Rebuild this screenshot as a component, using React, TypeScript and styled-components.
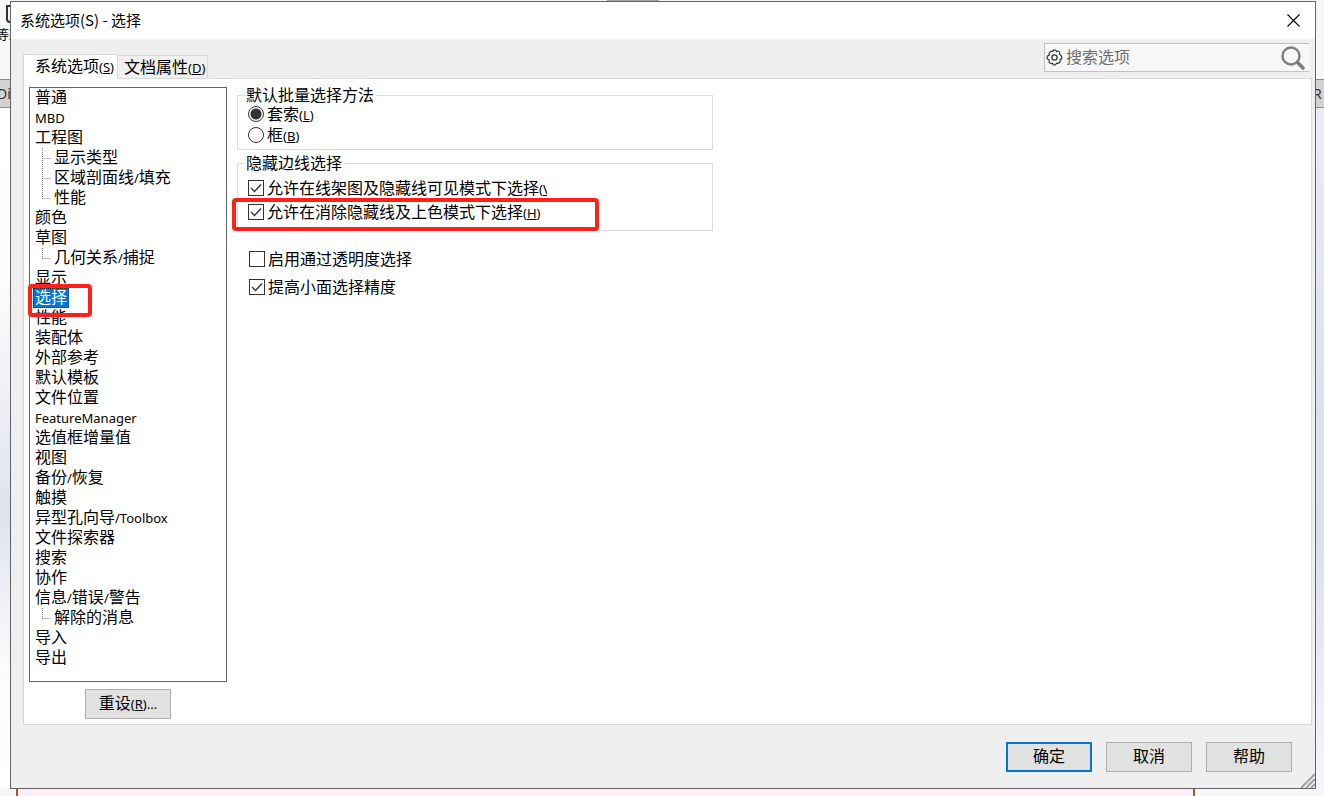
import React from "react";
import styled, { createGlobalStyle, css } from "styled-components";

const cjk = '"Noto Sans CJK SC", sans-serif';

const GlobalStyle = createGlobalStyle`
  * { box-sizing: border-box; }
  body { margin: 0; background: #f7f7f7; color: #000; font: 16px/20px ${cjk}; }
  button, input { font: inherit; color: inherit; }
`;

const Desktop = styled.div`
  display: grid;
  grid-template-columns: 10px minmax(0, 1fr) 8px;
  grid-template-rows: 1px 1fr 7px;
  min-height: 100vh;
`;

const TopStrip = styled.div`
  grid-column: 1 / -1;
  background: #f7f7f7;
  padding-left: 607px;
`;

const TopTab = styled.div`
  width: 52px;
  height: 1px;
  background: #a5a5a5;
`;

const Gutter = styled.div<{ $side: "left" | "right" }>`
  display: flex;
  flex-direction: column;
  overflow: hidden;
  background: ${(p) =>
    p.$side === "left"
      ? "linear-gradient(#f7f7f7 107px, #fff 107px, #fdfdfe 35%, #dfe3ec 65%, #fbfbfd 85%, #fff)"
      : "linear-gradient(#f7f7f7 107px, #eaecf4 107px, #dbe0ec 55%, #dde1ed 70%, #f5f6fa)"};
`;

const Ribbon = styled.div`
  display: flex;
  flex-direction: column;
  align-items: flex-end;
  height: 78px;
  padding-top: 4px;
  svg { display: block; }
`;

const RibbonLabel = styled.span`
  align-self: flex-start;
  margin-left: -4px;
  font-size: 13px;
  white-space: nowrap;
`;

const PanelCaption = styled.div`
  height: 29px;
  border: 1px solid #8c8c8c;
  border-width: 1px 0;
  background: #d2d2d2;
  color: #333;
  font: 14px/27px "Noto Sans", sans-serif;
  text-indent: -3px;
`;

const BottomStrip = styled.div`
  grid-column: 1 / -1;
  display: grid;
  grid-template-columns: 16px minmax(0, 1179fr) minmax(0, 129fr);
  background: #f7f7fb;
`;

const Sheet = styled.div`
  border: 2px solid #a8581c;
  border-width: 0 2px;
  background: #ffeef8;
`;

const Dialog = styled.main`
  display: flex;
  flex-direction: column;
  min-width: 0;
  border: 1px solid #646464;
  background: #efefef;
`;

const TitleBar = styled.header`
  display: flex;
  align-items: center;
  justify-content: space-between;
  height: 37px;
  padding: 0 15px 0 9px;
  background: #fff;
`;

const Title = styled.h1`
  margin: 0;
  padding-bottom: 2px;
  font: 15px/20px ${cjk};
`;

const CloseButton = styled.button`
  display: flex;
  padding: 0;
  border: 0;
  background: none;
`;

const TabBar = styled.div`
  display: flex;
  align-items: flex-end;
  height: 39px;
  padding: 0 6px 0 12px;
`;

const TabList = styled.div`
  display: flex;
  align-items: flex-end;
  flex: 1;
`;

const Tab = styled.button<{ $active?: boolean }>`
  display: flex;
  align-items: baseline;
  justify-content: center;
  height: 23px;
  padding: 0 2px 0 6px;
  border: 1px solid #d9d9d9;
  border-width: 1px 1px 0 0;
  background: #f0f0f0;
  line-height: 20px;
  ${(p) =>
    p.$active &&
    css`
      height: 25px;
      padding: 0 3px 4px 11px;
      border-left-width: 1px;
      margin-bottom: -1px;
      background: #fff;
      z-index: 1;
    `}
`;

const Search = styled.label`
  display: flex;
  align-items: center;
  align-self: flex-start;
  gap: 3px;
  width: 265px;
  height: 29px;
  margin-top: 4px;
  padding: 0 4px 0 1px;
  border: 1px solid #c3c3c3;
  border-right: 0;
  background: #f7f7f7;
`;

const SearchInput = styled.input`
  flex: 1;
  min-width: 0;
  padding: 0 0 4px;
  border: 0;
  outline: 0;
  background: none;
  &::placeholder { color: #6d6d6d; opacity: 1; }
`;

const Page = styled.section`
  display: flex;
  flex: 1;
  gap: 10px;
  margin: 0 3px 0 12px;
  padding: 8px 5px 5px;
  border: 1px solid #d9d9d9;
  background: #fff;
`;

const Sidebar = styled.nav`
  display: flex;
  flex-direction: column;
  align-items: center;
  gap: 7px;
  width: 198px;
`;

const Tree = styled.ul`
  flex: 1;
  align-self: stretch;
  margin: 0;
  padding: 0 0 0 3px;
  border: 1px solid #646464;
  list-style: none;
`;

const TreeRow = styled.li`
  display: flex;
  align-items: center;
  height: 20px;
  position: relative;
`;

const TreeItem = styled.button<{ $selected?: boolean }>`
  height: 20px;
  padding: 0 2px 4px;
  border: 0;
  background: none;
  line-height: 16px;
  white-space: nowrap;
  ${(p) =>
    p.$selected &&
    css`
      background: #0078d7;
      color: #fff;
      outline: 1px dotted #222;
      outline-offset: -1px;
    `}
`;

const Latin = styled.span`
  font: 13px/14px "Noto Sans", sans-serif;
`;

const Branch = styled.svg`
  display: block;
  flex: none;
`;

const Marker = styled.span<{ $x: number; $y: number; $width: number; $height: number }>`
  position: absolute;
  left: ${(p) => p.$x}px;
  top: ${(p) => p.$y}px;
  width: ${(p) => p.$width}px;
  height: ${(p) => p.$height}px;
  border: 4px solid #ff2116;
  border-radius: 4px;
  pointer-events: none;
  z-index: 2;
`;

const PushButton = styled.button<{ $primary?: boolean }>`
  width: 86px;
  height: 30px;
  padding: 0 0 4px;
  border: ${(p) => (p.$primary ? "2px solid #0078d7" : "1px solid #adadad")};
  background: #e1e1e1;
`;

const Options = styled.div`
  display: flex;
  flex-direction: column;
  gap: 5px;
  width: 476px;
  min-width: 0;
`;

const Group = styled.fieldset<{ $height: number; $top: number; $gap: number }>`
  position: relative;
  display: flex;
  flex-direction: column;
  gap: ${(p) => p.$gap}px;
  height: ${(p) => p.$height}px;
  margin: 0;
  padding: ${(p) => p.$top}px 0 0 10px;
  border: 1px solid #dcdcdc;
`;

const Legend = styled.legend`
  margin-left: -4px;
  padding: 0 2px;
  height: 16px;
  line-height: 14px;
`;

const Option = styled.label`
  display: flex;
  align-items: center;
  gap: 3px;
  height: 20px;
  white-space: nowrap;
`;

const OptionText = styled.span<{ $width?: number }>`
  padding-bottom: 2px;
  ${(p) =>
    p.$width &&
    css`
      width: ${p.$width}px;
      overflow: hidden;
    `}
`;

const Toggle = styled.input`
  appearance: none;
  flex: none;
  width: 16px;
  height: 16px;
  margin: 0;
  border: 1px solid #333;
  background: #fff center / 14px 14px no-repeat;
  &[type="radio"] { border-radius: 50%; }
  &[type="radio"]:checked { background-image: radial-gradient(circle, #333 5px, transparent 6px); }
`;

const CheckBox = styled.span`
  display: grid;
  > * { grid-area: 1 / 1; }
  svg { pointer-events: none; z-index: 1; visibility: hidden; }
  input:checked + svg { visibility: visible; }
`;

const LooseOptions = styled.div`
  display: flex;
  flex-direction: column;
  gap: 8px;
  padding: 13px 0 0 12px;
`;

const Footer = styled.footer`
  display: flex;
  justify-content: flex-end;
  gap: 14px;
  height: 63px;
  padding: 17px 23px 0 0;
  position: relative;
`;

const Grip = styled.svg`
  position: absolute;
  right: 0;
  bottom: 0;
`;

function Key({ k, tail = "" }: { k: string; tail?: string }) {
  return (
    <Latin>
      (<u>{k}</u>){tail}
    </Latin>
  );
}

function Check({ checked }: { checked?: boolean }) {
  return (
    <CheckBox>
      <Toggle type="checkbox" defaultChecked={checked} />
      <svg width="16" height="16" viewBox="0 0 16 16" fill="none" stroke="#333" strokeWidth="1.4">
        <path d="M3 8l3.5 3.5L13 4.5" />
      </svg>
    </CheckBox>
  );
}

type Item = { text: string; latin?: string; after?: string; child?: "mid" | "last"; selected?: boolean };

const items: Item[] = [
  { text: "普通" },
  { text: "", latin: "MBD" },
  { text: "工程图" },
  { text: "显示类型", child: "mid" },
  { text: "区域剖面线", latin: "/", after: "填充", child: "mid" },
  { text: "性能", child: "last" },
  { text: "颜色" },
  { text: "草图" },
  { text: "几何关系", latin: "/", after: "捕捉", child: "last" },
  { text: "显示" },
  { text: "选择", selected: true },
  { text: "性能" },
  { text: "装配体" },
  { text: "外部参考" },
  { text: "默认模板" },
  { text: "文件位置" },
  { text: "", latin: "FeatureManager" },
  { text: "选值框增量值" },
  { text: "视图" },
  { text: "备份", latin: "/", after: "恢复" },
  { text: "触摸" },
  { text: "异型孔向导", latin: "/Toolbox" },
  { text: "文件探索器" },
  { text: "搜索" },
  { text: "协作" },
  { text: "信息", latin: "/", after: "错误/警告" },
  { text: "解除的消息", child: "last" },
  { text: "导入" },
  { text: "导出" },
];

function Slashed({ text }: { text: string }) {
  return (
    <>
      {text.split("/").map((part, i) => (
        <React.Fragment key={i}>
          {i > 0 && <Latin>/</Latin>}
          {part}
        </React.Fragment>
      ))}
    </>
  );
}

export default function App() {
  return (
    <>
      <GlobalStyle />
      <Desktop>
        <TopStrip>
          <TopTab />
        </TopStrip>
        <Gutter $side="left">
          <Ribbon>
            <svg width="4" height="19" viewBox="0 0 4 19" fill="none" stroke="#333" strokeWidth="2">
              <path d="M4 1H1v13q0 3 3 3" />
            </svg>
            <RibbonLabel>等距</RibbonLabel>
          </Ribbon>
          <PanelCaption>Dim</PanelCaption>
        </Gutter>
        <Dialog>
          <TitleBar>
            <Title>系统选项(S) - 选择</Title>
            <CloseButton aria-label="关闭">
              <svg width="13" height="13" viewBox="0 0 13 13" stroke="#000" strokeWidth="1.1">
                <path d="M.5.5l12 12M12.5.5l-12 12" />
              </svg>
            </CloseButton>
          </TitleBar>
          <TabBar>
            <TabList role="tablist">
              <Tab role="tab" aria-selected $active>
                系统选项
                <Key k="S" />
              </Tab>
              <Tab role="tab">
                文档属性
                <Key k="D" />
              </Tab>
            </TabList>
            <Search>
              <svg width="17" height="17" viewBox="0 0 17 17" fill="none" stroke="#333" strokeWidth="1.2">
                <circle cx="8.5" cy="8.5" r="2.6" />
                <path d="M6.6 2.5Q7 .9 8.5.9t1.9 1.6q1.4-1 2.6.1t.5 2.6Q15.9 6.6 15.9 8.5t-1.8 2.2q.8 1.6-.6 2.8t-3 .7Q10 16.1 8.5 16.1t-1.9-1.7q-1.6.7-2.8-.5t-.6-2.9Q1 10.3 1 8.5t2.2-2.3q-.8-1.6.5-2.9t2.9-.8z" />
              </svg>
              <SearchInput placeholder="搜索选项" aria-label="搜索选项" />
              <svg width="24" height="24" viewBox="0 0 24 24" fill="none" stroke="#7d7d7d">
                <circle cx="10" cy="10" r="8.5" strokeWidth="2.4" />
                <path d="M16.5 16.5l5.5 5.5" strokeWidth="3.6" strokeLinecap="round" />
              </svg>
            </Search>
          </TabBar>
          <Page>
            <Sidebar>
              <Tree>
                {items.map((item, i) => (
                  <TreeRow key={i}>
                    {item.child && (
                      <Branch width="19" height="20" stroke="#808080" strokeDasharray="1 1">
                        <path d={item.child === "mid" ? "M9.5 0v20M9.5 10.5H18" : "M9.5 0v11M9.5 10.5H18"} />
                      </Branch>
                    )}
                    <TreeItem $selected={item.selected}>
                      {item.text}
                      {item.latin && <Latin>{item.latin}</Latin>}
                      {item.after && <Slashed text={item.after} />}
                    </TreeItem>
                    {item.selected && <Marker $x={-5} $y={-4} $width={64} $height={33} />}
                  </TreeRow>
                ))}
              </Tree>
              <PushButton>
                重设
                <Key k="R" tail="..." />
              </PushButton>
            </Sidebar>
            <Options>
              <Group $height={63} $top={1} $gap={1}>
                <Legend>默认批量选择方法</Legend>
                <Option>
                  <Toggle type="radio" name="method" defaultChecked />
                  <OptionText>
                    套索
                    <Key k="L" />
                  </OptionText>
                </Option>
                <Option>
                  <Toggle type="radio" name="method" />
                  <OptionText>
                    框
                    <Key k="B" />
                  </OptionText>
                </Option>
              </Group>
              <Group $height={76} $top={7} $gap={4}>
                <Legend>隐藏边线选择</Legend>
                <Option>
                  <Check checked />
                  <OptionText $width={280}>
                    允许在线架图及隐藏线可见模式下选择
                    <Key k="V" />
                  </OptionText>
                </Option>
                <Option>
                  <Check checked />
                  <OptionText>
                    允许在消除隐藏线及上色模式下选择
                    <Key k="H" />
                  </OptionText>
                </Option>
                <Marker $x={-6} $y={27} $width={367} $height={33} />
              </Group>
              <LooseOptions>
                <Option>
                  <Check />
                  <OptionText>启用通过透明度选择</OptionText>
                </Option>
                <Option>
                  <Check checked />
                  <OptionText>提高小面选择精度</OptionText>
                </Option>
              </LooseOptions>
            </Options>
          </Page>
          <Footer>
            <PushButton $primary>确定</PushButton>
            <PushButton>取消</PushButton>
            <PushButton>帮助</PushButton>
            <Grip width="15" height="15" viewBox="0 0 15 15" stroke="#a0a0a0" strokeWidth="2">
              <path d="M1 15L15 1M6 15l9-9M11 15l4-4" />
            </Grip>
          </Footer>
        </Dialog>
        <Gutter $side="right">
          <Ribbon />
          <PanelCaption>R</PanelCaption>
        </Gutter>
        <BottomStrip>
          <span />
          <Sheet />
        </BottomStrip>
      </Desktop>
    </>
  );
}
